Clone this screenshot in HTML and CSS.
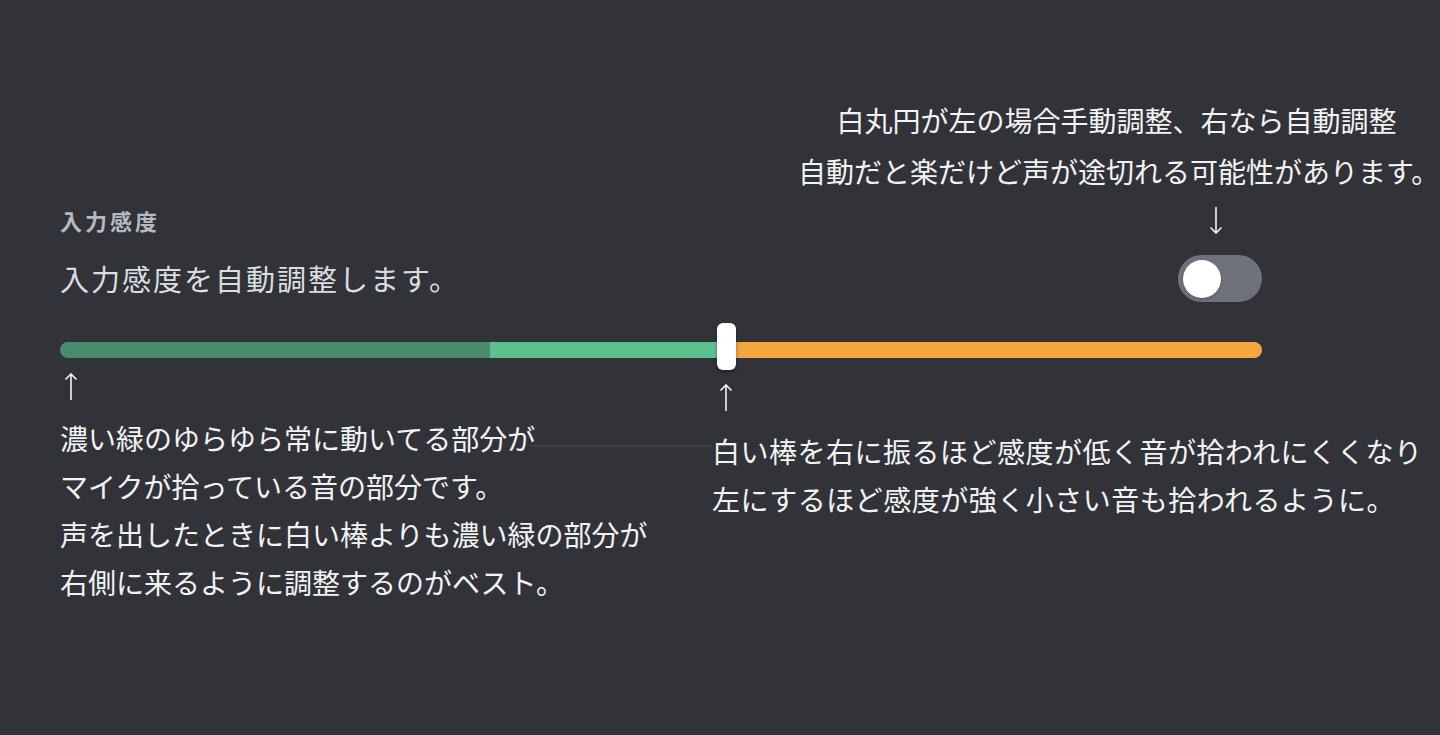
FILE: index.html
```html
<!DOCTYPE html>
<html lang="ja">
<head>
    <meta charset="UTF-8">
    <meta name="viewport" content="width=device-width, initial-scale=1.0">
    <title>入力感度</title>
    <link rel="stylesheet" href="styles.css">
</head>
<body>
    <main class="page">
        <!-- トグルの説明 -->
        <p class="top-note">白丸円が左の場合手動調整、右なら自動調整<br>自動だと楽だけど声が途切れる可能性があります。</p>

        <section class="setting">
            <div class="setting-head">
                <h2 class="setting-title">入力感度</h2>
                <span class="arrow arrow-down">
                    <svg width="14" height="27" viewBox="0 0 14 27"><path d="M7 0v26M1.5 20.5L7 26l5.5-5.5" fill="none" stroke="#f2f3f5" stroke-width="1.6"/></svg>
                </span>
            </div>

            <div class="setting-row">
                <p class="setting-desc">入力感度を自動調整します。</p>
                <div class="toggle"><span class="toggle-knob"></span></div>
            </div>

            <div class="slider">
                <div class="track">
                    <div class="seg seg-level"></div>
                    <div class="seg seg-active"></div>
                    <div class="seg seg-rest"></div>
                </div>
                <div class="thumb"></div>
            </div>
        </section>

        <div class="notes">
            <div class="note note-left">
                <span class="arrow arrow-up">
                    <svg width="14" height="27" viewBox="0 0 14 27"><path d="M7 27V1M1.5 6.5L7 1l5.5 5.5" fill="none" stroke="#f2f3f5" stroke-width="1.6"/></svg>
                </span>
                <p class="note-text">濃い緑のゆらゆら常に動いてる部分が<br>マイクが拾っている音の部分です。<br>声を出したときに白い棒よりも濃い緑の部分が<br>右側に来るように調整するのがベスト。</p>
            </div>
            <div class="note note-right">
                <span class="arrow arrow-up">
                    <svg width="14" height="27" viewBox="0 0 14 27"><path d="M7 27V1M1.5 6.5L7 1l5.5 5.5" fill="none" stroke="#f2f3f5" stroke-width="1.6"/></svg>
                </span>
                <p class="note-text">白い棒を右に振るほど感度が低く音が拾われにくくなり<br>左にするほど感度が強く小さい音も拾われるように。</p>
            </div>
        </div>
    </main>
</body>
</html>
```

FILE: styles.css
```css
:root {
    --bg: #313338;
    --text-white: #f2f3f5;
    --text-normal: #dbdee1;
    --text-muted: #b5bac1;
    --green-dark: #4a8b6b;
    --green: #5cc08f;
    --orange: #f4a63f;
    --toggle-off: #6f727a;
}

* {
    margin: 0;
    padding: 0;
    box-sizing: border-box;
    font-family: "Noto Sans CJK JP", "Noto Sans", sans-serif;
}

body {
    background-color: var(--bg);
    color: var(--text-white);
    width: 1440px;
    height: 735px;
    overflow: hidden;
}

.top-note {
    margin-left: 798px;
    width: 637px;
    padding-top: 95px;
    text-align: center;
    font-size: 28px;
    line-height: 51px;
    white-space: nowrap;
}

.setting {
    padding: 0 178px 0 60px;
}

.setting-head {
    display: flex;
    justify-content: space-between;
    align-items: center;
    height: 30px;
    margin-top: 8px;
}

.setting-title {
    font-size: 22px;
    font-weight: 700;
    line-height: 30px;
    color: var(--text-muted);
    letter-spacing: 3px;
}

.arrow {
    display: block;
    line-height: 0;
}

.arrow-down {
    width: 84px;
    padding-right: 8px;
    display: flex;
    justify-content: center;
}

.setting-row {
    display: flex;
    justify-content: space-between;
    align-items: center;
    height: 47px;
    margin-top: 20px;
}

.setting-desc {
    font-size: 29px;
    line-height: 40px;
    color: var(--text-normal);
    letter-spacing: 2px;
    padding-bottom: 2px;
}

.toggle {
    width: 84px;
    height: 47px;
    border-radius: 24px;
    background-color: var(--toggle-off);
    padding: 5px;
    display: flex;
    align-items: center;
}

.toggle-knob {
    width: 38px;
    height: 38px;
    border-radius: 50%;
    background-color: #fff;
    box-shadow: 0 1px 3px rgba(0, 0, 0, 0.25);
}

.slider {
    position: relative;
    height: 47px;
    margin-top: 21px;
    padding-top: 19px;
}

.track {
    display: flex;
    height: 16px;
    border-radius: 8px;
    overflow: hidden;
}

.seg-level {
    width: 430px;
    background-color: var(--green-dark);
}

.seg-active {
    width: 236px;
    background-color: var(--green);
}

.seg-rest {
    flex: 1;
    background-color: var(--orange);
}

.thumb {
    position: absolute;
    top: 0;
    left: 657px;
    width: 19px;
    height: 47px;
    border-radius: 6px;
    background-color: #fff;
    box-shadow: 0 2px 4px rgba(0, 0, 0, 0.35);
}

.notes {
    display: grid;
    grid-template-columns: 652px 1fr;
    padding-left: 60px;
}

.note-text {
    font-size: 28px;
    line-height: 48px;
    white-space: nowrap;
}

.note-left {
    position: relative;
}

.note-left .arrow-up {
    margin: 3px 0 0 4px;
}

.note-left .note-text {
    margin-top: 14px;
    position: relative;
}

/* 元画面の区切り線の名残 */
.note-left::before {
    content: "";
    position: absolute;
    left: 470px;
    right: 0;
    top: 75px;
    height: 2px;
    background-color: #3f4148;
}

.note-right .arrow-up {
    margin: 14px 0 0 7px;
}

.note-right .note-text {
    margin-top: 16px;
    letter-spacing: 0.5px;
}
```
